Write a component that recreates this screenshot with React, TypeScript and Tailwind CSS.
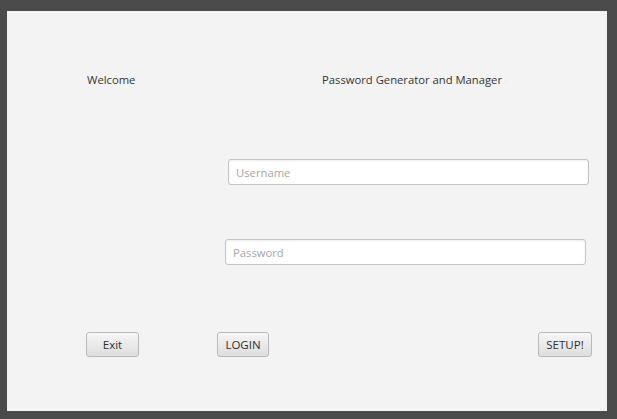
import React from 'react';

const font = { fontFamily: '"Open Sans", "Noto Sans", sans-serif' };

const Field: React.FC<{ placeholder: string; type?: string; className?: string }> = ({ placeholder, type = 'text', className }) => (
	<input
		type={type}
		placeholder={placeholder}
		className={`h-[26px] w-[361px] rounded-[3px] border border-[#c3c3c3] bg-white px-[7px] text-[11.25px] text-[#333] placeholder:text-[#a6a6a6] shadow-[inset_0_1px_2px_rgba(0,0,0,0.08)] outline-none ${className ?? ''}`}
	/>
);

const Btn: React.FC<{ label: string; className?: string }> = ({ label, className }) => (
	<button
		className={`h-[25px] rounded-[3px] border border-[#b9b9b9] bg-gradient-to-b from-[#f6f6f6] to-[#dedede] text-[11.5px] text-[#2f2f2f] ${className ?? ''}`}
	>
		{label}
	</button>
);

const App: React.FC = () => {
	return (
		<div className="h-[419px] w-[617px] bg-[#4b4b4b] pl-[7px] pt-[11px]" style={font}>
			<div className="flex h-[400px] w-[600px] flex-col bg-[#f3f3f3]">
				<div className="mt-[61px] flex h-[16px] items-center text-[11.25px] text-[#333]">
					<span className="w-[235px] pl-[80px] box-content">Welcome</span>
					<span>Password Generator and Manager</span>
				</div>

				<Field placeholder="Username" className="mt-[71px] ml-[221px]" />
				<Field placeholder="Password" type="password" className="mt-[54px] ml-[218px]" />

				<div className="mt-[67px] flex">
					<Btn label="Exit" className="ml-[79px] w-[53px]" />
					<Btn label="LOGIN" className="ml-[78px] w-[52px]" />
					<Btn label="SETUP!" className="ml-auto mr-[15px] w-[54px]" />
				</div>
			</div>
		</div>
	);
};

export default App;
